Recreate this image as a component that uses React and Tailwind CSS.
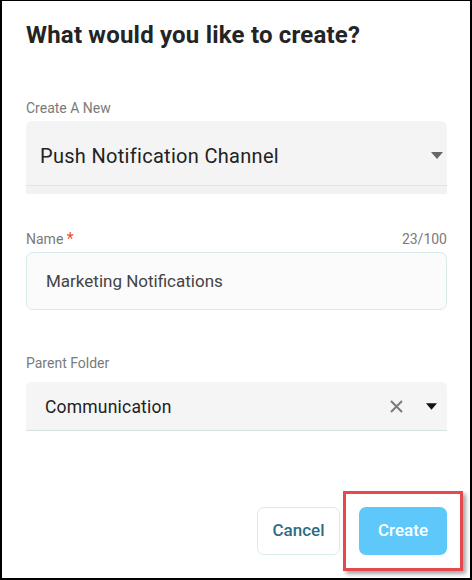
import React from "react";

const font = { fontFamily: "Roboto, 'Noto Sans', sans-serif" };

const Caret = ({ className }) => (
  <svg width="12" height="7" viewBox="0 0 12 7" className={className}>
    <path d="M0 0 H12 L6 7 Z" fill="currentColor" />
  </svg>
);

const Label = ({ children, className = "" }) => (
  <div className={`h-[16px] text-[14px] leading-[16px] text-[#7a7a7a] ${className}`}>
    {children}
  </div>
);

export default function App() {
  return (
    <div
      style={font}
      className="w-[472px] h-[580px] bg-white border-l-2 border-r-2 border-b-2 border-t border-black flex flex-col"
    >
      <div className="pl-[24px] pr-[23px] pt-[19px] flex flex-col">
        <h1 className="h-[30px] text-[24px] leading-[30px] font-bold tracking-[0.2px] text-[#242424]">
          What would you like to create?
        </h1>

        {/* type picker */}
        <Label className="mt-[50px]">Create A New</Label>
        <div className="mt-[5px] bg-[#f4f4f4] rounded-t-[6px]">
          <div className="h-[65px] flex items-center justify-between pl-[14px] pr-[4px] pt-[5px] border-b border-[#d6e8e8]">
            <span className="text-[20px] text-[#222] tracking-[0.3px]">
              Push Notification Channel
            </span>
            <Caret className="text-[#666]" />
          </div>
          <div className="h-[8px] bg-[#f2f2f2]" />
        </div>

        {/* name */}
        <div className="mt-[37px] flex justify-between">
          <Label>
            Name <span className="text-[#f4511e] text-[16px]">*</span>
          </Label>
          <Label>23/100</Label>
        </div>
        <div className="mt-[5px] h-[58px] rounded-[7px] border border-[#d6eaea] bg-[#fbfbfb] flex items-center pl-[19px] pt-[1px]">
          <span className="text-[17px] text-[#444]">Marketing Notifications</span>
        </div>

        {/* folder */}
        <Label className="mt-[45px]">Parent Folder</Label>
        <div className="mt-[11px] h-[49px] bg-[#f5f5f5] rounded-t-[5px] border-b border-[#d6e2e2] flex items-center pl-[19px] pr-[10px] pt-[3px]">
          <span className="flex-1 text-[17.5px] tracking-[0.2px] text-[#222]">Communication</span>
          <svg width="13" height="13" viewBox="0 0 13 13" className="text-[#7a7a7a] -mt-[3px]">
            <path d="M1 1 L12 12 M12 1 L1 12" stroke="currentColor" strokeWidth="2" />
          </svg>
          <Caret className="ml-[23px] text-[#111] w-[11px] -mt-[3px]" />
        </div>
      </div>

      <div className="mt-[60px] flex justify-end items-center pr-[7px]">
        <button className="h-[48px] w-[83px] rounded-[7px] border border-[#d9ecec] bg-white text-[17px] font-medium text-[#2e6d87]">
          Cancel
        </button>
        <div className="ml-[3px] border-[3px] border-[#e5484d] p-[13px] shadow-[3px_3px_4px_rgba(0,0,0,0.35)]">
          <button className="h-[48px] w-[88px] rounded-[7px] bg-[#5fc8fb] text-[17px] font-medium text-white">
            Create
          </button>
        </div>
      </div>
    </div>
  );
}
